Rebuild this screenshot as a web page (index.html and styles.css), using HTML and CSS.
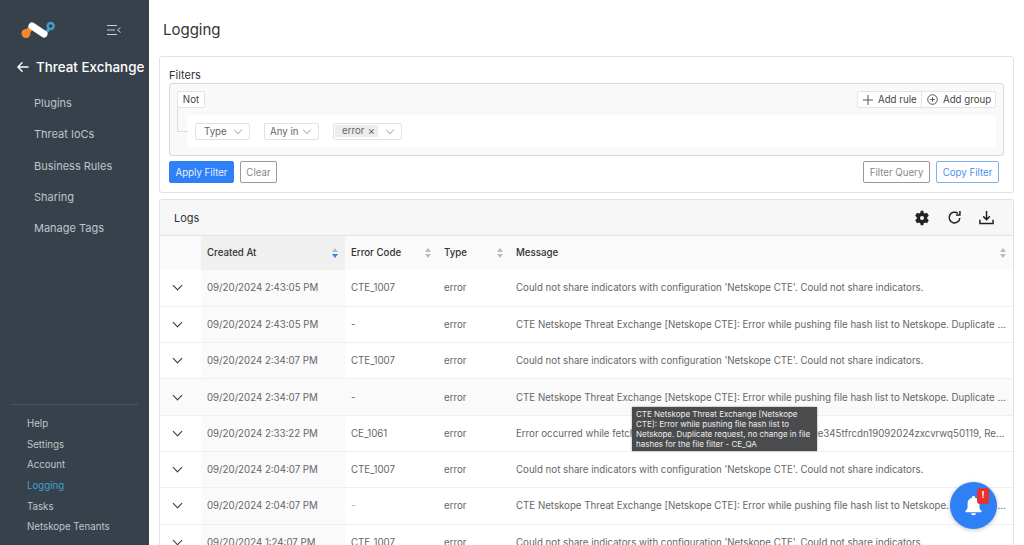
FILE: index.html
```html
<!DOCTYPE html>
<html lang="en">
<head>
    <meta charset="UTF-8">
    <meta name="viewport" content="width=device-width, initial-scale=1.0">
    <title>Logging</title>
    <link rel="stylesheet" href="styles.css">
</head>
<body>
    <aside class="sidebar">
        <div class="brand">
            <svg class="logo" width="36" height="18" viewBox="0 0 36 18" fill="none" stroke-linecap="round">
                <path d="M5 12.500L11 5.500" stroke="#f08a2c" stroke-width="5"/>
                <circle cx="5" cy="12.500" r="4.500" fill="#f08a2c"/>
                <path d="M24 13L28.500 7" stroke="#3f9fc6" stroke-width="3"/>
                <path d="M11 5L23 13" stroke="#fff" stroke-width="7"/>
                <circle cx="29.700" cy="5" r="3" fill="#36414b" stroke="#3f9fc6" stroke-width="2.400"/>
            </svg>
            <svg class="collapse" width="14" height="10" viewBox="0 0 14 10" fill="none" stroke="#c9ced2" stroke-width="1">
                <path d="M0 .5H10M0 5H8M0 9.500H10M13.500 2.500L10.500 5L13.500 7.500"/>
            </svg>
        </div>
        <div class="module">
            <svg width="12" height="12" viewBox="0 0 12 12" fill="none" stroke="#fff" stroke-width="1.300">
                <path d="M11.500 6H1M5.500 1.200L.9 6L5.500 10.800"/>
            </svg>
            <span>Threat Exchange</span>
        </div>
        <nav class="main-nav">
            <a href="#">Plugins</a>
            <a href="#">Threat IoCs</a>
            <a href="#">Business Rules</a>
            <a href="#">Sharing</a>
            <a href="#">Manage Tags</a>
        </nav>
        <nav class="bottom-nav">
            <a href="#">Help</a>
            <a href="#">Settings</a>
            <a href="#">Account</a>
            <a href="#" class="active">Logging</a>
            <a href="#">Tasks</a>
            <a href="#">Netskope Tenants</a>
        </nav>
    </aside>

    <main class="content">
        <h1>Logging</h1>

        <section class="panel filters">
            <div class="filters-title">Filters</div>
            <div class="query">
                <div class="query-top">
                    <span class="btn-not">Not</span>
                    <div class="query-actions">
                        <span>
                            <svg width="10" height="10" viewBox="0 0 10 10" stroke="#555" fill="none"><path d="M5 0V10M0 5H10"/></svg>
                            Add rule
                        </span>
                        <span>
                            <svg width="11" height="11" viewBox="0 0 11 11" stroke="#555" fill="none"><circle cx="5.500" cy="5.500" r="4.800"/><path d="M5.500 3.200V7.800M3.200 5.500H7.800"/></svg>
                            Add group
                        </span>
                    </div>
                </div>
                <div class="rule">
                    <span class="select select-type">Type <i class="chev"></i></span>
                    <span class="select select-op">Any in <i class="chev"></i></span>
                    <span class="select select-val"><span class="tag">error <b>×</b></span> <i class="chev"></i></span>
                </div>
            </div>
            <div class="filter-buttons">
                <button class="btn btn-primary">Apply Filter</button>
                <button class="btn btn-grey btn-clear">Clear</button>
                <span class="spacer"></span>
                <button class="btn btn-grey btn-query">Filter Query</button>
                <button class="btn btn-blue">Copy Filter</button>
            </div>
        </section>

        <section class="panel logs">
            <div class="logs-head">
                <span>Logs</span>
                <div class="logs-icons">
                    <svg width="16" height="16" viewBox="0 0 24 24" fill="#222"><path d="M19.800 13.300a8 8 0 0 0 0-2.600l2.400-1.900-2.700-4.600-2.900 1.100a8 8 0 0 0-2.200-1.300L14 1h-4l-.4 3a8 8 0 0 0-2.200 1.300L4.500 4.200 1.800 8.800l2.400 1.900a8 8 0 0 0 0 2.600l-2.400 1.900 2.700 4.600 2.900-1.100a8 8 0 0 0 2.200 1.300l.4 3h4l.4-3a8 8 0 0 0 2.200-1.300l2.900 1.100 2.700-4.600zM12 15a3 3 0 1 1 0-6 3 3 0 0 1 0 6z"/></svg>
                    <svg width="15" height="15" viewBox="0 0 16 16" fill="none" stroke="#222" stroke-width="1.600"><path d="M13.700 8.500a5.700 5.700 0 1 1-2.100-4.900"/><path d="M13.800 1V5.200H9.600"/></svg>
                    <svg width="15" height="15" viewBox="0 0 16 16" fill="none" stroke="#222" stroke-width="1.600"><path d="M8 1V10M4.500 6.800L8 10.300L11.500 6.800M1 10.500V14.500H15V10.500"/></svg>
                </div>
            </div>
            <table class="log-table">
                <colgroup>
                    <col class="col-exp"><col class="col-date"><col class="col-code"><col class="col-type"><col>
                </colgroup>
                <thead>
                    <tr>
                        <th></th>
                        <th class="sorted">Created At<i class="sort sort-on"></i></th>
                        <th>Error Code<i class="sort"></i></th>
                        <th>Type<i class="sort"></i></th>
                        <th>Message<i class="sort"></i></th>
                    </tr>
                </thead>
                <tbody>
                    <tr>
                        <td><i class="row-chev"></i></td><td class="sorted">09/20/2024 2:43:05 PM</td><td>CTE_1007</td><td>error</td>
                        <td><div class="msg">Could not share indicators with configuration 'Netskope CTE'. Could not share indicators.</div></td>
                    </tr>
                    <tr>
                        <td><i class="row-chev"></i></td><td class="sorted">09/20/2024 2:43:05 PM</td><td>-</td><td>error</td>
                        <td><div class="msg">CTE Netskope Threat Exchange [Netskope CTE]: Error while pushing file hash list to Netskope. Duplicate request, no change in file hashes for the file filter - CE_QA</div></td>
                    </tr>
                    <tr>
                        <td><i class="row-chev"></i></td><td class="sorted">09/20/2024 2:34:07 PM</td><td>CTE_1007</td><td>error</td>
                        <td><div class="msg">Could not share indicators with configuration 'Netskope CTE'. Could not share indicators.</div></td>
                    </tr>
                    <tr class="hovered">
                        <td><i class="row-chev"></i></td><td class="sorted">09/20/2024 2:34:07 PM</td><td>-</td><td>error</td>
                        <td><div class="msg">CTE Netskope Threat Exchange [Netskope CTE]: Error while pushing file hash list to Netskope. Duplicate request, no change in file hashes for the file filter - CE_QA</div></td>
                    </tr>
                    <tr>
                        <td><i class="row-chev"></i></td><td class="sorted">09/20/2024 2:33:22 PM</td><td>CE_1061</td><td>error</td>
                        <td><div class="msg">Error occurred while fetching alert from tenant for request id abcde345tfrcdn19092024zxcvrwq50119, Retrying after some time.</div></td>
                    </tr>
                    <tr>
                        <td><i class="row-chev"></i></td><td class="sorted">09/20/2024 2:04:07 PM</td><td>CTE_1007</td><td>error</td>
                        <td><div class="msg">Could not share indicators with configuration 'Netskope CTE'. Could not share indicators.</div></td>
                    </tr>
                    <tr>
                        <td><i class="row-chev"></i></td><td class="sorted">09/20/2024 2:04:07 PM</td><td class="dim">-</td><td>error</td>
                        <td><div class="msg">CTE Netskope Threat Exchange [Netskope CTE]: Error while pushing file hash list to Netskope. Duplicate request, no change in file hashes for the file filter - CE_QA</div></td>
                    </tr>
                    <tr>
                        <td><i class="row-chev"></i></td><td class="sorted">09/20/2024 1:24:07 PM</td><td>CTE_1007</td><td>error</td>
                        <td><div class="msg">Could not share indicators with configuration 'Netskope CTE'. Could not share indicators.</div></td>
                    </tr>
                </tbody>
            </table>
        </section>
    </main>

    <div class="tooltip">CTE Netskope Threat Exchange [Netskope CTE]: Error while pushing file hash list to Netskope. Duplicate request, no change in file hashes for the file filter - CE_QA</div>

    <div class="bell">
        <svg width="17" height="21" viewBox="0 0 20 23" fill="#fff"><path d="M10 0a1.800 1.800 0 0 0-1.800 1.800v.6C5 3.200 3 5.800 3 9v4.500c0 2-1 3-2.500 4.500-.5.600-.2 1.500.7 1.500h17.600c.9 0 1.200-.9.7-1.500C18 16.500 17 15.500 17 13.500V9c0-3.200-2-5.800-5.200-6.600v-.6A1.800 1.800 0 0 0 10 0zM7 20.500a3 2.500 0 0 0 6 0z"/></svg>
        <span class="bell-badge">!</span>
    </div>
</body>
</html>
```

FILE: styles.css
```css
* {
    box-sizing: border-box;
}
html, body {
    height: 100%;
}
body {
    margin: 0;
    display: flex;
    height: 545px;
    overflow: hidden;
    background-color: #fff;
    font-family: Inter, "Liberation Sans", sans-serif;
    font-size: 9.700px;
    color: #444;
}
a {
    text-decoration: none;
}

/* sidebar */
.sidebar {
    width: 149px;
    flex-shrink: 0;
    display: flex;
    flex-direction: column;
    background-color: #36414b;
    overflow: hidden;
}
.brand {
    display: flex;
    align-items: flex-start;
    padding: 21px 0 0 21px;
    height: 48px;
}
.collapse {
    margin: 4px 0 0 50px;
}
.module {
    display: flex;
    align-items: center;
    gap: 7px;
    margin-top: 3px;
    padding-left: 17px;
    height: 32px;
    font-size: 13.400px;
    font-weight: 500;
    color: #fff;
    white-space: nowrap;
}
.main-nav {
    display: flex;
    flex-direction: column;
    margin-top: 5px;
}
.main-nav a {
    padding-left: 34px;
    height: 31.300px;
    line-height: 31.300px;
    font-size: 11px;
    color: #c0c4c8;
}
.bottom-nav {
    display: flex;
    flex-direction: column;
    margin: auto 11px 7px;
    padding-top: 9px;
    border-top: 1px solid #4a555f;
}
.bottom-nav a {
    padding-left: 16px;
    height: 20.700px;
    line-height: 20.700px;
    font-size: 9.700px;
    color: #c0c4c8;
}
.bottom-nav a.active {
    color: #3fa3cf;
}

/* main area */
.content {
    flex: 1;
    min-width: 0;
    padding: 0 10px;
}
h1 {
    margin: 0;
    padding: 20px 0 0 4px;
    height: 56px;
    font-size: 15px;
    font-weight: 400;
    line-height: 20px;
    color: #333;
}
.panel {
    border: 1px solid #e2e2e2;
    border-radius: 3px;
    background-color: #fff;
}
.filters {
    height: 137px;
    padding: 11px 9px 0 9px;
}
.filters-title {
    font-size: 11px;
    line-height: 14px;
    color: #333;
}
.query {
    margin-top: 1px;
    height: 73px;
    padding: 7px 7px 0 7px;
    border: 1px solid #d8d8d8;
    border-radius: 3px;
    background-color: #f9f9f9;
}
.query-top {
    display: flex;
    justify-content: space-between;
    height: 17px;
}
.btn-not {
    width: 28px;
    height: 17px;
    line-height: 15px;
    text-align: center;
    color: #444;
    background-color: #fff;
    border: 1px solid #e4e4e4;
    border-radius: 2px;
}
.query-actions {
    display: flex;
    height: 17px;
    background-color: #fff;
    border: 1px solid #e4e4e4;
    border-radius: 2px;
    color: #444;
}
.query-actions span {
    display: flex;
    align-items: center;
    gap: 5px;
    width: 73px;
    padding: 0 0 0 5px;
    white-space: nowrap;
}
.query-actions span:first-child {
    width: 64px;
    border-right: 1px solid #e4e4e4;
}
.rule {
    position: relative;
    display: flex;
    align-items: center;
    gap: 14px;
    height: 32px;
    margin: 7px 0 0 10px;
    padding-left: 8px;
    background-color: #fff;
    border-radius: 2px;
}
.rule::before {
    content: "";
    position: absolute;
    left: -10px;
    top: -7px;
    width: 10px;
    height: 23px;
    border-left: 1px solid #ddd;
    border-bottom: 1px solid #ddd;
}
.select {
    display: flex;
    align-items: center;
    justify-content: space-between;
    height: 17px;
    padding: 0 8px;
    border: 1px solid #e2e2e2;
    border-radius: 2px;
    color: #666;
}
.select-type {
    width: 55px;
}
.select-op {
    width: 55px;
    padding-left: 5px;
}
.select-val {
    width: 69px;
    padding-left: 1px;
}
.tag {
    display: flex;
    justify-content: space-between;
    width: 43px;
    padding: 0 3px 0 7px;
    line-height: 12px;
    background-color: #ededed;
}
.tag b {
    font-weight: 400;
    font-size: 11px;
}
.chev {
    width: 6px;
    height: 6px;
    margin-top: -3px;
    border-right: 1px solid #bbb;
    border-bottom: 1px solid #bbb;
    transform: rotate(45deg);
}
.filter-buttons {
    display: flex;
    gap: 6px;
    margin-top: 5px;
    padding-right: 5px;
}
.spacer {
    flex: 1;
}
.btn {
    height: 22px;
    padding: 0;
    border-radius: 2px;
    font-family: inherit;
    font-size: 9.700px;
    white-space: nowrap;
    background-color: #fff;
}
.btn-primary {
    width: 65px;
    color: #e8f0ff;
    background-color: #2f80f6;
    border: 1px solid #2f80f6;
}
.btn-grey {
    color: #888;
    border: 1px solid #999;
}
.btn-clear {
    width: 37px;
}
.btn-query {
    width: 67px;
}
.btn-blue {
    width: 63px;
    color: #4a90f0;
    border: 1px solid #7fb0f5;
}

.logs {
    margin-top: 6px;
    border-bottom: 0;
}
.logs-head {
    display: flex;
    align-items: center;
    justify-content: space-between;
    height: 36px;
    padding: 0 19px 0 14px;
    font-size: 11px;
    color: #333;
    background-color: #f7f7f7;
    border-bottom: 1px solid #e2e2e2;
}
.logs-icons {
    display: flex;
    align-items: center;
    gap: 17px;
}
.log-table {
    width: 100%;
    border-collapse: collapse;
    table-layout: fixed;
}
.col-exp {
    width: 41px;
}
.col-date {
    width: 144px;
}
.col-code {
    width: 93px;
}
.col-type {
    width: 72px;
}
.log-table th {
    position: relative;
    height: 34px;
    padding: 0 6px 1px;
    text-align: left;
    font-weight: 500;
    color: #333;
    background-color: #fafafa;
}
.log-table th.sorted {
    background-color: #f0f0f0;
}
.log-table td {
    height: 36.300px;
    padding: 0 6px;
    color: #666;
    white-space: nowrap;
    border-bottom: 1px solid #f0f0f0;
}
.log-table td.sorted {
    background-color: #fafafa;
}
.log-table tr.hovered td {
    background-color: #fafafa;
}
.log-table td.dim {
    color: #aaa;
}
.msg {
    overflow: hidden;
    text-overflow: ellipsis;
    white-space: nowrap;
}
.row-chev {
    display: block;
    width: 7px;
    height: 7px;
    margin: -4px 0 0 8px;
    border-right: 1.500px solid #333;
    border-bottom: 1.500px solid #333;
    transform: rotate(45deg);
}
.sort {
    position: absolute;
    right: 6px;
    top: 12px;
    width: 7px;
    height: 10px;
}
.sort::before,
.sort::after {
    content: "";
    position: absolute;
    left: 0;
    border-left: 3.500px solid transparent;
    border-right: 3.500px solid transparent;
}
.sort::before {
    top: 0;
    border-bottom: 4px solid #bbb;
}
.sort::after {
    bottom: 0;
    border-top: 4px solid #bbb;
}
.sort-on::after {
    border-top-color: #2f80f6;
}

/* things on top */
.tooltip {
    position: absolute;
    left: 632px;
    top: 407px;
    width: 185px;
    height: 44px;
    padding: 2px 4px;
    font-size: 8px;
    line-height: 10px;
    color: #eee;
    background-color: #4a4b4d;
    box-shadow: 0 0 2px rgba(0, 0, 0, 0.4);
}
.bell {
    position: absolute;
    left: 950px;
    top: 482px;
    width: 47px;
    height: 47px;
    display: flex;
    align-items: center;
    justify-content: center;
    border-radius: 50%;
    background-color: #2f80f6;
    box-shadow: 0 1px 4px rgba(0, 0, 0, 0.25);
}
.bell-badge {
    position: absolute;
    left: 27px;
    top: 6px;
    width: 12px;
    height: 16px;
    line-height: 14px;
    text-align: center;
    font-size: 9px;
    font-weight: 700;
    color: #fff;
    background-color: #e8322a;
    border-radius: 3px;
}
```
